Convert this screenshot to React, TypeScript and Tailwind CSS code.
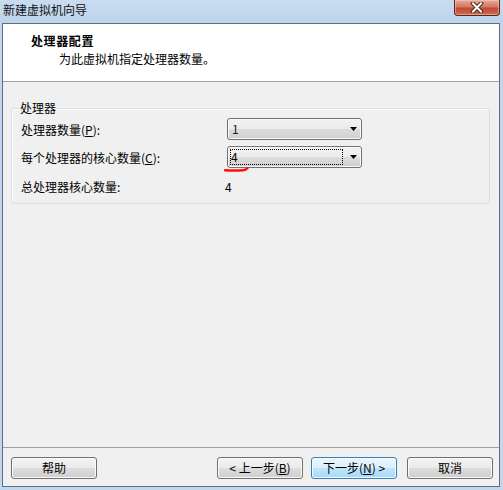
import React from "react";

const btnBase =
  "h-[22px] w-[86px] rounded-[3px] border text-[12px] leading-[16px] flex items-center justify-center text-black";
const btnNormal =
  "border-[#707070] bg-[linear-gradient(to_bottom,#f2f2f2_0%,#ebebeb_50%,#dddddd_50%,#cfcfcf_100%)] shadow-[inset_0_0_0_1px_#fafafa]";
const btnDefault =
  "border-[#3c7fb1] bg-[linear-gradient(to_bottom,#eaf6fd_0%,#d9f0fc_50%,#bee6fd_50%,#a7d9f5_100%)] shadow-[inset_0_0_0_1px_#f4fbfe]";

function Arrow() {
  return (
    <svg width="7" height="4" viewBox="0 0 7 4" className="block">
      <polygon points="0,0 7,0 3.5,4" fill="#000" />
    </svg>
  );
}

export default function App() {
  return (
    <div className="w-[503px] h-[490px] flex flex-col bg-[#c2d7ee] font-['Noto_Sans_CJK_SC',sans-serif] text-black overflow-hidden">
      {/* Title bar */}
      <div className="h-[23px] flex items-start justify-between bg-[linear-gradient(to_bottom,#c9dcf1,#bdd3ec)]">
        <span className="pl-[3px] pt-[2px] text-[12px] leading-[16px] text-[#111]">新建虚拟机向导</span>
        <div className="mr-[3px] w-[46px] h-[16px] rounded-b-[4px] border border-t-0 border-[#5c2419] bg-[linear-gradient(to_bottom,#e9a896_0%,#d47a64_45%,#c04a33_55%,#cf6a50_100%)] shadow-[inset_0_0_0_1px_rgba(255,220,210,0.45)] flex items-center justify-center">
          <svg width="14" height="11" viewBox="0 0 14 11">
            <path d="M3 1.5 L11 9.5 M11 1.5 L3 9.5" stroke="#4a2a22" strokeWidth="4" strokeLinecap="square" />
            <path d="M3 1.5 L11 9.5 M11 1.5 L3 9.5" stroke="#ffffff" strokeWidth="2" strokeLinecap="square" />
          </svg>
        </div>
      </div>

      {/* Window panel */}
      <div className="flex-1 ml-[2px] mr-[3px] mb-[3px] border border-[#5f6e82] flex flex-col">
        {/* Header */}
        <div className="h-[58px] shrink-0 bg-white pl-[28px] pt-[9px] border-b border-[#a0a0a0]">
          <div className="text-[12px] leading-[16px] font-bold tracking-[0.6px]">处理器配置</div>
          <div className="pl-[28px] mt-[2px] text-[12px] leading-[16px]">为此虚拟机指定处理器数量。</div>
        </div>

        {/* Body */}
        <div className="flex-1 bg-[#f0f0f0] flex flex-col">
          <div className="relative ml-[8px] mt-[26px] w-[479px] rounded-[3px] border border-[#d5dfe5] shadow-[inset_1px_1px_0_#ffffff] pt-[9px] pb-[8px] pl-[9px]">
            <span className="absolute left-[7px] top-[-9px] px-[1px] bg-[#f0f0f0] text-[12px] leading-[16px]">处理器</span>

            <div className="flex items-center h-[22px]">
              <span className="w-[206px] text-[12px] leading-[16px] pt-[2px]">
                处理器数量(<span className="underline">P</span>):
              </span>
              <div className={`w-[135px] h-[22px] rounded-[3px] border ${btnNormal} flex items-center justify-between pl-[4px] pr-[4px]`}>
                <span className="text-[12px] leading-[16px] text-[#3a0a2a]">1</span>
                <Arrow />
              </div>
            </div>

            <div className="flex items-center h-[22px] mt-[6px]">
              <span className="w-[206px] text-[12px] leading-[16px] pt-[1px]">
                每个处理器的核心数量(<span className="underline">C</span>):
              </span>
              <div className="relative">
                <div className={`w-[135px] h-[22px] rounded-[3px] border ${btnNormal} flex items-center justify-between pl-[2px] pr-[4px]`}>
                  <div className="w-[113px] h-[16px] border border-dotted border-black flex items-center pl-[0px]">
                    <span className="text-[12px] leading-[14px]">4</span>
                  </div>
                  <Arrow />
                </div>
                <svg
                  className="absolute left-[-3px] top-[21px]"
                  width="26"
                  height="5"
                  viewBox="0 0 26 5"
                >
                  <path
                    d="M1 3.2 Q 10 3.8 19 3.2 Q 22 3 23.5 1"
                    stroke="#ff1010"
                    strokeWidth="2.4"
                    fill="none"
                    strokeLinecap="round"
                  />
                </svg>
              </div>
            </div>

            <div className="flex items-center h-[16px] mt-[11px]">
              <span className="w-[206px] text-[12px] leading-[16px]">总处理器核心数量:</span>
              <span className="text-[12px] leading-[16px] -ml-[2px]">4</span>
            </div>
          </div>

          <div className="flex-1" />

          {/* Bottom buttons */}
          <div className="border-t border-[#a0a0a0] pt-[9px] pb-[7px] flex items-center">
            <button className={`${btnBase} ${btnNormal} ml-[8px]`}>帮助</button>
            <div className="flex-1" />
            <button className={`${btnBase} ${btnNormal}`}>
              &lt; 上一步(<span className="underline">B</span>)
            </button>
            <button className={`${btnBase} ${btnDefault} ml-[8px]`}>
              下一步(<span className="underline">N</span>) &gt;
            </button>
            <button className={`${btnBase} ${btnNormal} ml-[10px] mr-[6px]`}>取消</button>
          </div>
        </div>
      </div>
    </div>
  );
}
